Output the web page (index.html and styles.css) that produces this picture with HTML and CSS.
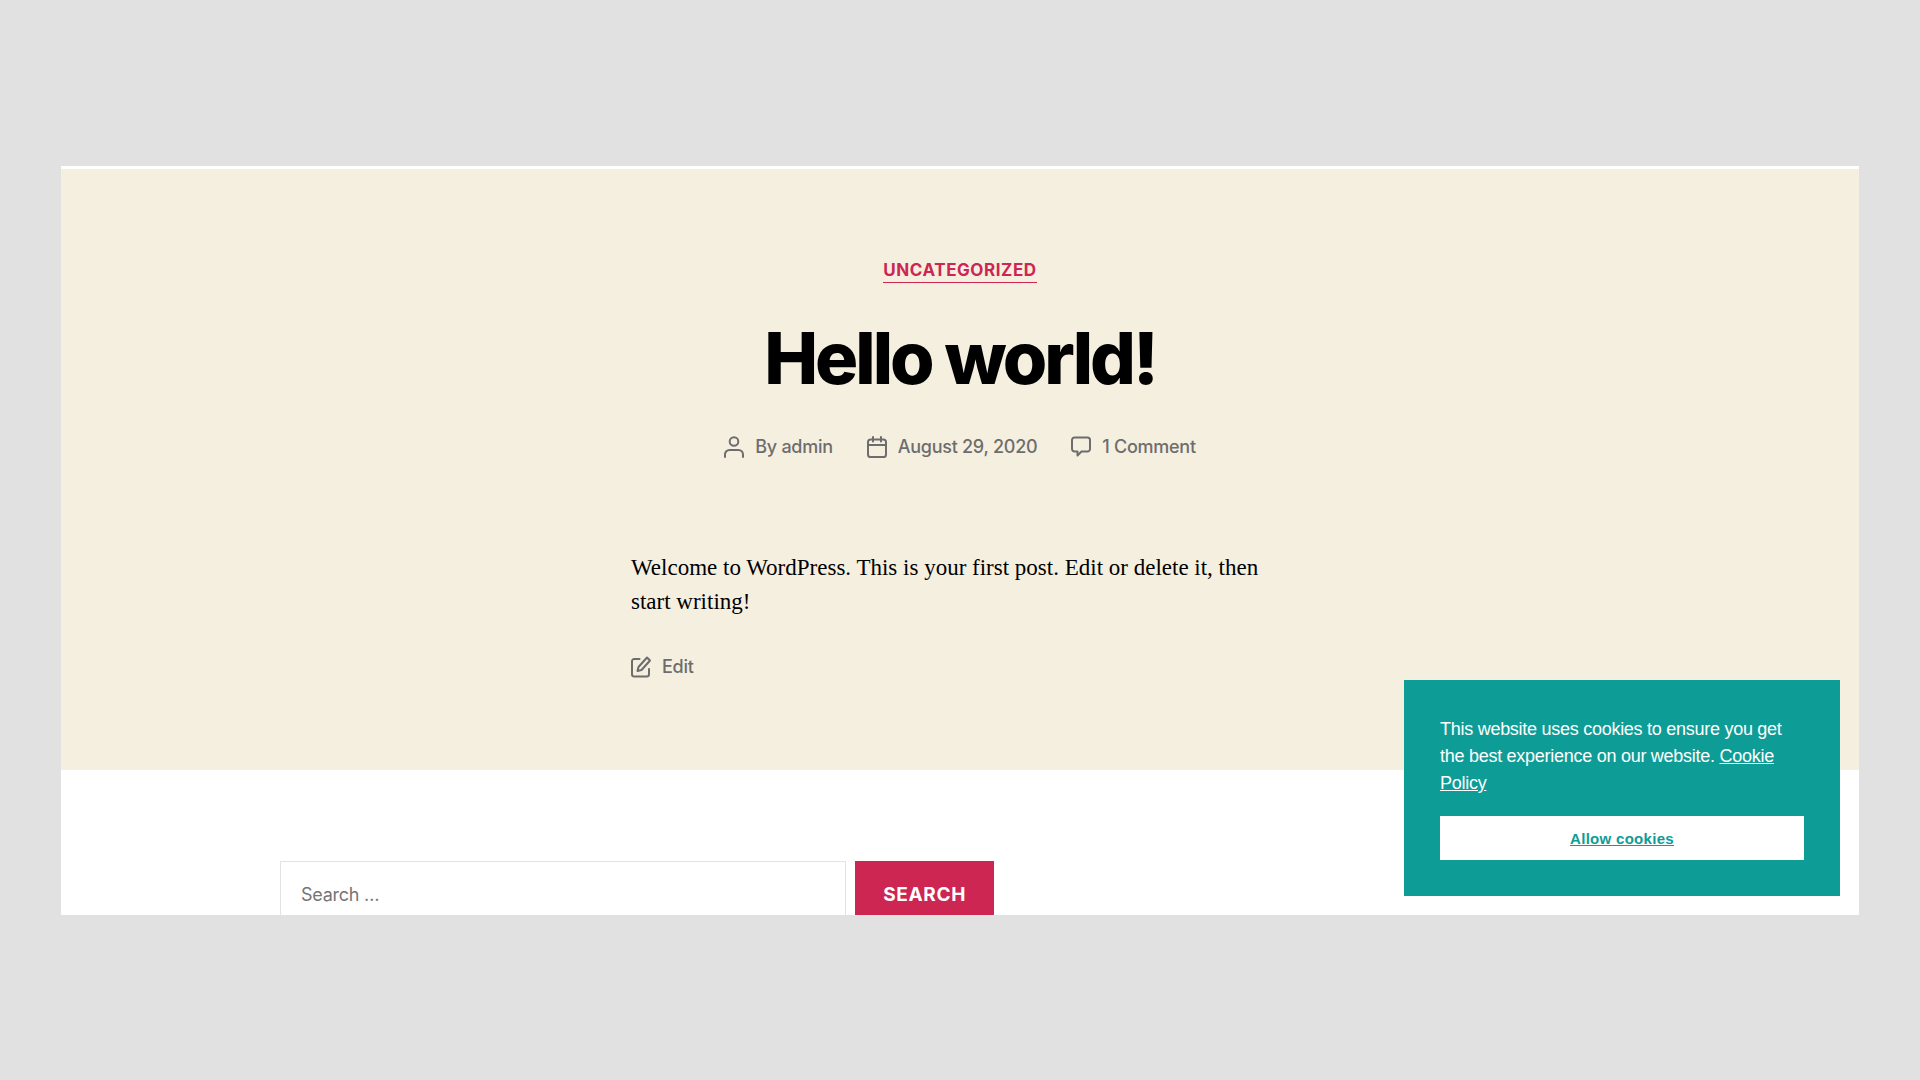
FILE: index.html
```
<!DOCTYPE html>
<html lang="en">
<head>
    <meta charset="UTF-8">
    <meta name="viewport" content="width=device-width, initial-scale=1.0">
    <title>Hello world!</title>
    <link rel="stylesheet" href="styles.css">
</head>
<body>
    <div class="site">
        <!-- Post -->
        <main class="post">
            <header class="entry-header">
                <a class="category" href="#">Uncategorized</a>
                <h1 class="entry-title">Hello world!</h1>
                <ul class="post-meta">
                    <li>
                        <svg class="icon" viewBox="0 0 20 22" aria-hidden="true">
                            <circle cx="10" cy="5.5" r="4.3"/>
                            <path d="M1 21v-2.5a4.5 4.5 0 0 1 4.5-4.5h9a4.5 4.5 0 0 1 4.5 4.5V21"/>
                        </svg>
                        <span>By <a href="#">admin</a></span>
                    </li>
                    <li>
                        <svg class="icon" viewBox="0 0 20 22" aria-hidden="true">
                            <rect x="1" y="3.5" width="18" height="17.5" rx="2.6"/>
                            <path d="M1 9h18M6 1v4.5M14 1v4.5"/>
                        </svg>
                        <a href="#">August 29, 2020</a>
                    </li>
                    <li>
                        <svg class="icon" viewBox="0 0 20 22" aria-hidden="true">
                            <path d="M3.5 1.5h13A2.5 2.5 0 0 1 19 4v9a2.5 2.5 0 0 1-2.500 2.500H10.500L6.500 19.500v-4h-3A2.500 2.500 0 0 1 1 13V4a2.500 2.500 0 0 1 2.500-2.500z"/>
                        </svg>
                        <a href="#">1 Comment</a>
                    </li>
                </ul>
            </header>

            <div class="entry-content">
                <p>Welcome to WordPress. This is your first post. Edit or delete it, then start writing!</p>
                <div class="post-edit">
                    <svg class="icon" viewBox="0 0 20 22" aria-hidden="true">
                        <path d="M8.500 3H3.200A2.200 2.200 0 0 0 1 5.200v13.100a2.200 2.200 0 0 0 2.200 2.200h12.600a2.200 2.200 0 0 0 2.200-2.200V13"/>
                        <path d="M16 1.500l3 3L10.500 14l-4 1 1-4z"/>
                    </svg>
                    <a href="#">Edit</a>
                </div>
            </div>
        </main>

        <!-- Footer widgets -->
        <footer class="widgets">
            <form class="search-form" action="#" method="get">
                <input type="search" name="s" class="search-field" placeholder="Search …" aria-label="Search for">
                <button type="submit" class="search-submit">Search</button>
            </form>
        </footer>

        <!-- Cookie notice -->
        <div class="cookie-notice" role="dialog" aria-label="Cookie notice">
            <p>This website uses cookies to ensure you get the best experience on our website. <a href="#">Cookie Policy</a></p>
            <button type="button" class="cookie-allow">Allow cookies</button>
        </div>
    </div>
</body>
</html>
```
FILE: styles.css
```
/* Basic reset */
* {
    margin: 0;
    padding: 0;
    box-sizing: border-box;
}

body {
    display: flex;
    height: 100vh;
    padding: 166px 61px 165px;
    background: #e1e1e1;
    font-family: Inter, "Liberation Sans", sans-serif;
    font-size: 18px;
    letter-spacing: -0.015em;
    color: #000;
}

a {
    color: inherit;
    text-decoration: none;
}

.site {
    position: relative;
    flex: 1;
    overflow: hidden;
    background: #fff;
    border-top: 3px solid #fff;
}

/* Post */
.post {
    padding: 90px 40px;
    background: #f5efe0;
}

.entry-header {
    display: flex;
    flex-direction: column;
    align-items: center;
    text-align: center;
}

.category {
    border-bottom: 1px solid #cd2653;
    color: #cd2653;
    font-size: 17px;
    font-weight: 700;
    line-height: 23px;
    letter-spacing: 0.0333em;
    text-transform: uppercase;
}

.entry-title {
    margin-top: 33px;
    font-size: 72px;
    font-weight: 800;
    line-height: 84px;
    letter-spacing: -0.0415em;
}

.post-meta {
    display: flex;
    flex-wrap: wrap;
    justify-content: center;
    gap: 12px 34px;
    margin-top: 34px;
    list-style: none;
}

.post-meta li,
.post-edit {
    display: flex;
    align-items: center;
    gap: 11px;
    color: #6d6d6d;
    font-weight: 500;
    line-height: 26px;
}

.icon {
    width: 20px;
    height: 22px;
    fill: none;
    stroke: #6d6d6d;
    stroke-width: 2;
    stroke-linejoin: round;
    stroke-linecap: round;
}

.entry-content {
    max-width: 658px;
    margin: 91px auto 0;
}

.entry-content p {
    font-family: "Liberation Serif", serif;
    font-size: 23px;
    line-height: 34px;
    letter-spacing: normal;
}

.post-edit {
    margin-top: 35px;
}

/* Footer widgets */
.widgets {
    max-width: 1360px;
    margin: 0 auto;
    padding: 91px 0;
}

.search-form {
    display: flex;
    gap: 9px;
    max-width: 714px;
}

.search-field {
    flex: 1;
    min-width: 0;
    height: 66px;
    padding: 0 20px;
    border: 1px solid #e3e3e3;
    background: #fff;
    font: inherit;
    letter-spacing: inherit;
}

.search-field::placeholder {
    color: #757575;
}

.search-submit {
    padding: 0 28px;
    border: none;
    background: #cd2653;
    color: #fff;
    font: inherit;
    font-size: 19px;
    font-weight: 700;
    letter-spacing: 0.0333em;
    text-transform: uppercase;
    cursor: pointer;
}

/* Cookie notice */
.cookie-notice {
    position: absolute;
    right: 19px;
    bottom: 19px;
    width: 436px;
    padding: 36px;
    background: #0e9c96;
    color: #fff;
    font-family: "Liberation Sans", Arial, sans-serif;
    line-height: 27px;
}

.cookie-notice a {
    text-decoration: underline;
}

.cookie-allow {
    width: 100%;
    height: 44px;
    margin-top: 19px;
    border: none;
    background: #fff;
    color: #0e9c96;
    font-family: inherit;
    font-size: 15px;
    font-weight: 700;
    letter-spacing: 0.02em;
    text-decoration: underline;
    cursor: pointer;
}
```
